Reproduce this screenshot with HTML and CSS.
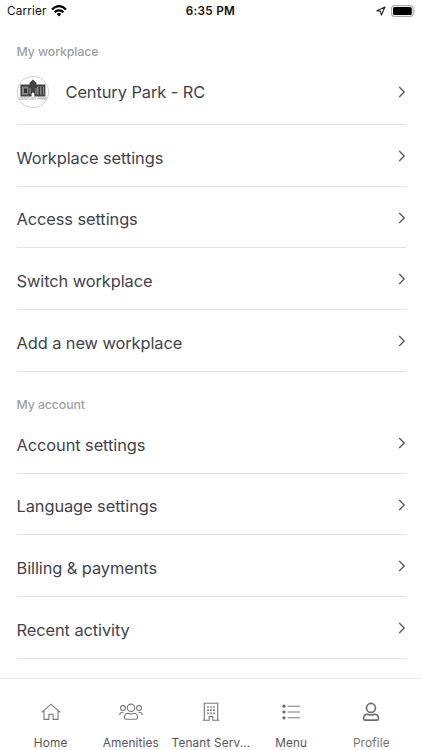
FILE: index.html
```html
<!DOCTYPE html>
<html lang="en">
<head>
<meta charset="utf-8">
<title>Profile</title>
<link rel="stylesheet" href="styles.css">
</head>
<body>
<svg width="0" height="0" class="defs"><symbol id="chev" viewBox="0 0 8 12"><path d="M1.2 1 6.2 6 1.2 11" fill="none" stroke="#50525a" stroke-width="1.25"/></symbol></svg>
<div class="screen">
  <header class="status">
    <div class="left"><span>Carrier</span>
      <svg width="16" height="12" viewBox="0 0 16 12"><g fill="none" stroke="#000" stroke-width="2.2"><path d="M1 4.5C5-.1 11-.1 15 4.5"/><path d="M3.6 7.3C6 4.6 10 4.6 12.4 7.3"/></g><path d="M5.6 8.9Q8 7 10.4 8.9L8 11.4Z"/></svg>
    </div>
    <div class="time">6:35 PM</div>
    <div class="right">
      <svg width="10" height="10" viewBox="0 0 10 10"><path d="M9 1 .9 4.8 4.5 5.4 5.4 9Z" fill="none" stroke="#222" stroke-width="1.1" stroke-linejoin="round"/></svg>
      <svg width="25" height="12" viewBox="0 0 25 12"><rect x=".6" y=".6" width="21.6" height="10.8" rx="3" fill="#fff" stroke="#aaa" stroke-width="1.1"/><rect x="2" y="2" width="18.8" height="8" rx="1.6"/><path d="M23.3 4.2q1.5 1.8 0 3.6z" fill="#999"/></svg>
    </div>
  </header>
  <main>
    <h2>My workplace</h2>
    <a class="row place">
      <svg class="logo" width="34" height="34" viewBox="0 0 34 34"><circle cx="17" cy="17" r="15.8" fill="#fff" stroke="#d2d2d2"/><path d="M4 8h9.2v-2l3.3-3.5L20 6v2h9v12.5H4z" fill="#444" transform="translate(.4 2)scale(1 .95)"/><path d="M6 11.7h6.2v8H6zM21 11.7h7v8h-7z" fill="#888"/><path d="M8 13.5h3v4.5H8zM22.6 12h1.3v8h-1.3zM25.5 12h1.3v8h-1.3z" fill="#333"/><path d="M15.6 22v-3.2l1.4-1.6 1.4 1.6V22z" fill="#fff"/><path d="M14 13v6M20 13v6" stroke="#aaa" stroke-width=".8"/><text x="17" y="24.6" text-anchor="middle" textLength="28" lengthAdjust="spacingAndGlyphs" class="tiny">CENTURY PARK</text></svg>
      <span>Century Park - RC</span><svg class="chev"><use href="#chev"/></svg></a>
    <a class="row"><span>Workplace settings</span><svg class="chev"><use href="#chev"/></svg></a>
    <a class="row"><span>Access settings</span><svg class="chev"><use href="#chev"/></svg></a>
    <a class="row"><span>Switch workplace</span><svg class="chev"><use href="#chev"/></svg></a>
    <a class="row"><span>Add a new workplace</span><svg class="chev"><use href="#chev"/></svg></a>
    <h2 class="second">My account</h2>
    <a class="row"><span>Account settings</span><svg class="chev"><use href="#chev"/></svg></a>
    <a class="row"><span>Language settings</span><svg class="chev"><use href="#chev"/></svg></a>
    <a class="row"><span>Billing &amp; payments</span><svg class="chev"><use href="#chev"/></svg></a>
    <a class="row"><span>Recent activity</span><svg class="chev"><use href="#chev"/></svg></a>
  </main>
  <nav>
    <a><svg viewBox="0 0 24 20"><path d="M2.7 10.4 12 2.2l9.3 8.2M5 8.8v8.6h4.9v-5.2h4.2v5.2H19V8.8"/></svg><span>Home</span></a>
    <a><svg viewBox="0 0 24 20"><circle cx="12" cy="5.8" r="3.7"/><circle cx="4" cy="6" r="2.4"/><circle cx="20" cy="6" r="2.4"/><path d="M5.5 15.2c0-3 1.5-4 3.6-4 1.8.8 4 .8 5.8 0 2.1 0 3.6 1 3.6 4q0 2-1.7 2H7.2q-1.7 0-1.7-2zM.8 13.2c0-2.200 1.2-3 3.7-2.900M23.2 13.2c0-2.200-1.2-3-3.7-2.900"/></svg><span>Amenities</span></a>
    <a><svg viewBox="0 0 24 20"><path d="M5.300 18V1.200h13.400V18M3.800 18.200h6.400v-3.700h3.600v3.700h6.400"/><path d="M8.200 5h1.600M11.200 5h1.600M14.200 5h1.600M8.200 8.200h1.600M11.200 8.200h1.600M14.200 8.200h1.600M8.200 11.400h1.600M11.200 11.400h1.600M14.200 11.400h1.600" stroke-width="1.700"/></svg><span>Tenant Serv...</span></a>
    <a><svg viewBox="0 0 24 20"><path d="M8.600 4.200H21M8.600 10H21M8.600 15.800H21"/><g fill="#666" stroke="none"><circle cx="5" cy="4.200" r="1.600"/><circle cx="5" cy="10" r="1.600"/><circle cx="5" cy="15.800" r="1.600"/></g></svg><span>Menu</span></a>
    <a class="active"><svg viewBox="0 0 24 20"><circle cx="12" cy="5.900" r="4.500"/><path d="M4.500 16.600c0-3 1.600-4.400 4.100-4.400 2 .9 4.800.9 6.800 0 2.500 0 4.100 1.400 4.100 4.400q0 1.500-1.500 1.500H6q-1.500 0-1.500-1.500z"/></svg><span>Profile</span></a>
  </nav>
</div>
</body>
</html>
```
FILE: styles.css
```css
* { box-sizing: border-box; }
body { margin: 0; background: #fff; font-family: Inter, "Liberation Sans", sans-serif; }
.defs { display: none; }
.screen { height: 750px; display: flex; flex-direction: column; overflow: hidden; }
.status { height: 22px; display: grid; grid-template-columns: 1fr auto 1fr; align-items: center; padding: 0 6px 0 7px; font-size: 11.7px; color: #111; }
.left, .right { display: flex; align-items: center; gap: 5px; }
.left { letter-spacing: .2px; gap: 4px; }
.right { justify-content: flex-end; }
.time { font-weight: 600; letter-spacing: .3px; margin-left: -2px; }
main { flex: 1; padding: 0 16.5px; }
h2 { margin: 0; height: 37.4px; padding-top: 21px; line-height: 17px; font-size: 12.3px; font-weight: 500; letter-spacing: -.08px; color: #a0a0a3; }
.second { height: 40.6px; padding-top: 24px; }
.row { display: flex; align-items: center; height: 61.6px; border-bottom: 1px solid #e3e3e5; color: #41434b; font-size: 16.4px; letter-spacing: -.08px; }
.row span { flex: 1; padding-top: 4.8px; }
.chev { width: 8px; height: 12px; margin-top: 1px; }
.place { height: 65.8px; }
.place span { padding: 0 0 0 16px; }
.place .logo { margin-left: -1px; }
.place .chev { margin: 0; }
.tiny { font-size: 3.6px; letter-spacing: 0; fill: #777; }
nav { height: 72px; border-top: 1px solid #e9e9eb; display: grid; grid-template-columns: repeat(5, 80.2px); justify-content: center; }
nav a { display: flex; flex-direction: column; align-items: center; padding-top: 23px; color: #55565a; font-size: 11.8px; line-height: 16px; letter-spacing: .15px; white-space: nowrap; }
nav svg { width: 24px; height: 20px; margin-bottom: 12.6px; fill: none; stroke: #77787a; stroke-width: 1.1; }
nav .active { color: #76766b; }
nav .active svg { stroke: #6d6e63; stroke-width: 1.6; }
```
